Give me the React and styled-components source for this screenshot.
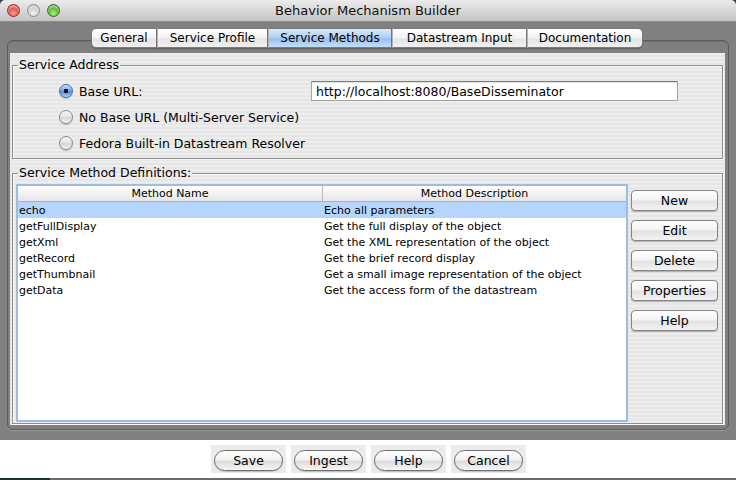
import React from 'react';
import styled, { createGlobalStyle } from 'styled-components';

const GlobalStyle = createGlobalStyle`
  html, body {
    margin: 0;
    padding: 0;
    background: #ffffff;
  }
  body {
    font-family: "DejaVu Sans", "Liberation Sans", sans-serif;
    font-size: 12px;
    color: #000;
  }
  * { box-sizing: border-box; }
`;

const Window = styled.div`
  width: 736px;
  height: 480px;
  display: flex;
  flex-direction: column;
  background: #2e3c48;
  overflow: hidden;
`;

const TitleBar = styled.div`
  height: 22px;
  flex: none;
  display: flex;
  align-items: center;
  position: relative;
  padding-left: 7px;
  background: linear-gradient(#ececec, #d3d3d3 60%, #c4c4c4);
  border-radius: 5px 5px 0 0;
  border-bottom: 1px solid #8e8e8e;
`;

const Lights = styled.div`
  display: flex;
  gap: 7px;
`;

const Light = styled.span`
  width: 13px;
  height: 13px;
  border-radius: 50%;
  border: 1px solid ${p => p.$edge};
  background: radial-gradient(circle at 50% 75%, ${p => p.$glow} 0%, ${p => p.$base} 60%, ${p => p.$edge} 100%);
  box-shadow: inset 0 2px 2px rgba(255, 255, 255, 0.6);
`;

const Title = styled.div`
  position: absolute;
  left: 0;
  right: 0;
  text-align: center;
  font-size: 13px;
  color: #111;
  pointer-events: none;
`;

const Body = styled.div`
  height: 418px;
  flex: none;
  background: #808080;
  padding: 6px 7px 10px 7px;
  display: flex;
  flex-direction: column;
`;

const TabStrip = styled.div`
  display: flex;
  justify-content: flex-start;
  position: relative;
  z-index: 2;
  padding-left: 84px;
`;

const Tab = styled.div`
  width: ${p => p.$w}px;
  height: 20px;
  display: flex;
  align-items: center;
  justify-content: center;
  font-size: 12px;
  white-space: nowrap;
  border: 1px solid #7a7a7a;
  border-left: ${p => (p.$first ? '1px solid #7a7a7a' : '1px solid #b4b4b4')};
  border-radius: ${p => (p.$first ? '5px 0 0 5px' : p.$last ? '0 5px 5px 0' : '0')};
  background: ${p =>
    p.$active
      ? 'linear-gradient(#d9e9fb, #b0d0f3 45%, #98c1ef 55%, #c4defa)'
      : 'linear-gradient(#ffffff, #f3f3f3 50%, #e4e4e4 55%, #f0f0f0)'};
  box-shadow: 0 1px 1px rgba(0, 0, 0, 0.25);
`;

const Pane = styled.div`
  flex: 1;
  margin-top: -8px;
  border: 1px solid #5c5c5c;
  border-radius: 6px;
  box-shadow: inset 0 1px 0 #6e6e6e, 0 1px 0 #9a9a9a;
  padding: 12px 3px 4px 2px;
  display: flex;
`;

const Panel = styled.div`
  flex: 1;
  background: repeating-linear-gradient(#ededed 0px, #ededed 2px, #e6e6e6 2px, #e6e6e6 4px);
  padding: 4px 2px 1px 2px;
  display: flex;
  flex-direction: column;
  gap: 6px;
`;

const Group = styled.fieldset`
  margin: 0;
  min-width: 0;
  border: 1px solid #8d8d8d;
  box-shadow: inset 1px 1px 0 #fafafa, 1px 1px 0 #fafafa;
  padding: 0;
  display: flex;
  flex-direction: column;
  flex: ${p => (p.$grow ? 1 : 'none')};
`;

const GroupLegend = styled.legend`
  font-size: 12.5px;
  padding: 0 1px;
  margin-left: 5px;
  line-height: 16px;
`;

const AddressGrid = styled.div`
  display: grid;
  grid-template-columns: 252px 367px;
  row-gap: 6px;
  padding: 8px 0 5px 46px;
`;

const RadioRow = styled.label`
  display: flex;
  align-items: center;
  gap: 6px;
  height: 20px;
  font-size: 12.5px;
`;

const Radio = styled.span`
  width: 14px;
  height: 14px;
  border-radius: 50%;
  border: 1px solid ${p => (p.$checked ? '#4a6fa0' : '#8a8a8a')};
  background: ${p =>
    p.$checked
      ? 'radial-gradient(circle at 50% 50%, #111 0 2px, transparent 2.5px), linear-gradient(#c9defa, #6ea2e6 50%, #4f8ee0 55%, #a9d0fb)'
      : 'linear-gradient(#f8f8f8, #e2e2e2 50%, #d6d6d6 55%, #f4f4f4)'};
  box-shadow: 0 1px 1px rgba(0, 0, 0, 0.2);
  flex: none;
`;

const UrlField = styled.div`
  height: 20px;
  background: #fff;
  border: 1px solid #a4a4a4;
  border-top-color: #7c7c7c;
  box-shadow: inset 0 1px 1px rgba(0, 0, 0, 0.12);
  padding: 0 4px;
  display: flex;
  align-items: center;
  font-size: 12.5px;
`;

const MethodsBody = styled.div`
  flex: 1;
  display: flex;
  gap: 3px;
  padding: 3px 3px 1px 3px;
`;

const Table = styled.div`
  width: 612px;
  border: 2px solid #9dbce0;
  background: #fff;
  display: flex;
  flex-direction: column;
`;

const Columns = styled.div`
  display: grid;
  grid-template-columns: 304px 1fr;
  height: 16px;
  background: ${p =>
    p.$head ? 'linear-gradient(#ffffff, #f2f2f2 50%, #e6e6e6)' : p.$selected ? '#b5d5fd' : '#ffffff'};
  border-bottom: ${p => (p.$head ? '1px solid #b0b0b0' : 'none')};
  font-size: 11px;
`;

const Cell = styled.div`
  display: flex;
  align-items: center;
  justify-content: ${p => (p.$head ? 'center' : 'flex-start')};
  padding-left: ${p => (p.$head ? '0' : '1px')};
  border-left: ${p => (p.$head && p.$divider ? '1px solid #b8b8b8' : p.$divider ? '1px solid transparent' : 'none')};
  white-space: nowrap;
  overflow: hidden;
`;

const SideButtons = styled.div`
  display: flex;
  flex-direction: column;
  gap: 9px;
  padding-top: 6px;
`;

const SideButton = styled.div`
  width: 87px;
  height: 21px;
  border: 1px solid #858585;
  border-radius: 4px;
  background: linear-gradient(#ffffff, #f4f4f4 45%, #e3e3e3 55%, #f3f3f3);
  box-shadow: 0 1px 1px rgba(0, 0, 0, 0.25);
  display: flex;
  align-items: center;
  justify-content: center;
  font-size: 12.5px;
`;

const Footer = styled.div`
  height: 38px;
  flex: none;
  background: #ffffff;
  display: flex;
  justify-content: center;
  align-items: flex-start;
  gap: 5px;
  padding-top: 5px;
  padding-left: 1px;
`;

const ButtonWell = styled.div`
  width: 75px;
  height: 28px;
  background: #ececec;
  padding: 5px 3px 2px 3px;
`;

const PillButton = styled.div`
  width: 69px;
  height: 21px;
  border: 1px solid #6e6e6e;
  border-radius: 11px;
  background: linear-gradient(#ffffff, #f2f2f2 45%, #dcdcdc 55%, #f6f6f6);
  box-shadow: 0 1px 1px rgba(0, 0, 0, 0.2);
  display: flex;
  align-items: center;
  justify-content: center;
  font-size: 12.5px;
`;

const BottomStrip = styled.div`
  height: 2px;
  flex: none;
  background: linear-gradient(90deg, #1c3336 0, #1c3336 50px, #6a6a6a 50px);
`;

const tabs = [
  { label: 'General', w: 66 },
  { label: 'Service Profile', w: 111 },
  { label: 'Service Methods', w: 124, active: true },
  { label: 'Datastream Input', w: 135 },
  { label: 'Documentation', w: 116 },
];

const methods = [
  ['echo', 'Echo all parameters'],
  ['getFullDisplay', 'Get the full display of the object'],
  ['getXml', 'Get the XML representation of the object'],
  ['getRecord', 'Get the brief record display'],
  ['getThumbnail', 'Get a small image representation of the object'],
  ['getData', 'Get the access form of the datastream'],
];

const App = () => {
  return (
    <>
      <GlobalStyle />
      <Window>
        <TitleBar>
          <Lights>
            <Light $base="#e0443e" $glow="#ff9c8f" $edge="#8e2a25" />
            <Light $base="#c8c8c8" $glow="#f2f2f2" $edge="#8c8c8c" />
            <Light $base="#4fae32" $glow="#a8f07c" $edge="#2d6e1c" />
          </Lights>
          <Title>Behavior Mechanism Builder</Title>
        </TitleBar>

        <Body>
          <TabStrip>
            {tabs.map((t, i) => (
              <Tab
                key={t.label}
                $w={t.w}
                $active={t.active}
                $first={i === 0}
                $last={i === tabs.length - 1}
              >
                {t.label}
              </Tab>
            ))}
          </TabStrip>

          <Pane>
            <Panel>
              <Group>
                <GroupLegend>Service Address</GroupLegend>
                <AddressGrid>
                  <RadioRow>
                    <Radio $checked />
                    Base URL:
                  </RadioRow>
                  <UrlField>http://localhost:8080/BaseDisseminator</UrlField>
                  <RadioRow>
                    <Radio />
                    No Base URL (Multi-Server Service)
                  </RadioRow>
                  <div />
                  <RadioRow>
                    <Radio />
                    Fedora Built-in Datastream Resolver
                  </RadioRow>
                  <div />
                </AddressGrid>
              </Group>

              <Group $grow>
                <GroupLegend>Service Method Definitions:</GroupLegend>
                <MethodsBody>
                  <Table>
                    <Columns $head>
                      <Cell $head>Method Name</Cell>
                      <Cell $head $divider>Method Description</Cell>
                    </Columns>
                    {methods.map(([name, desc], i) => (
                      <Columns key={name} $selected={i === 0}>
                        <Cell>{name}</Cell>
                        <Cell $divider>{desc}</Cell>
                      </Columns>
                    ))}
                  </Table>
                  <SideButtons>
                    {['New', 'Edit', 'Delete', 'Properties', 'Help'].map(b => (
                      <SideButton key={b}>{b}</SideButton>
                    ))}
                  </SideButtons>
                </MethodsBody>
              </Group>
            </Panel>
          </Pane>
        </Body>

        <Footer>
          {['Save', 'Ingest', 'Help', 'Cancel'].map(b => (
            <ButtonWell key={b}>
              <PillButton>{b}</PillButton>
            </ButtonWell>
          ))}
        </Footer>
        <BottomStrip />
      </Window>
    </>
  );
};

export default App;
